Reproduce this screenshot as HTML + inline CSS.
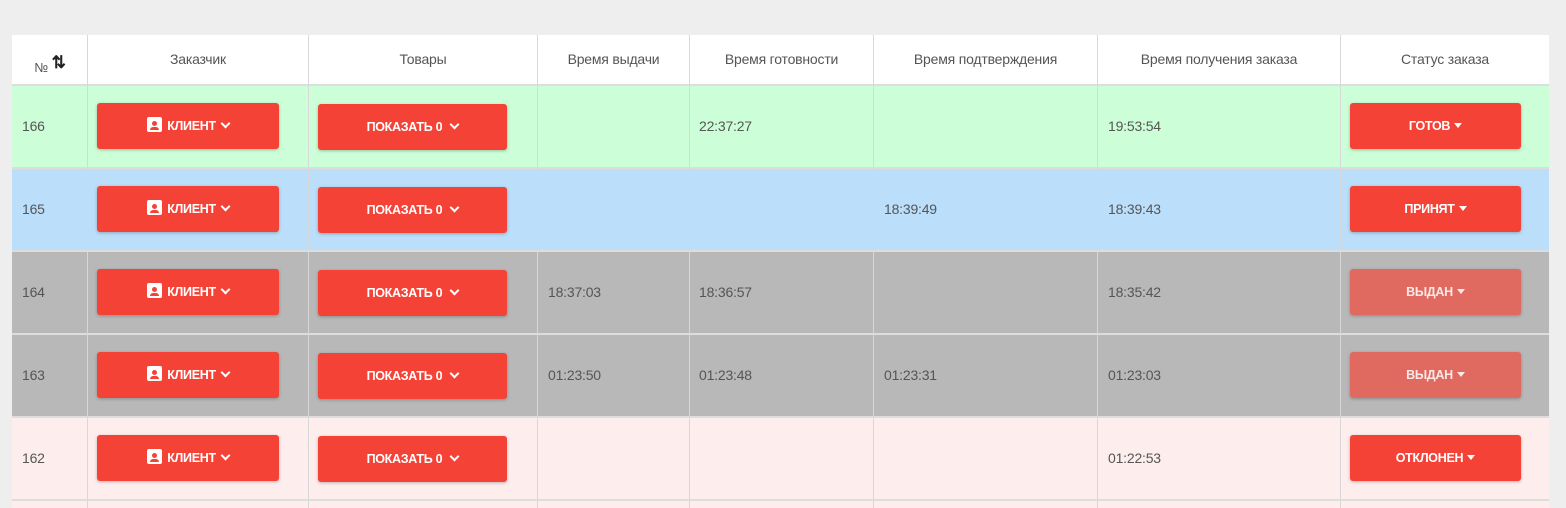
<!DOCTYPE html>
<html><head><meta charset="utf-8"><style>
html,body{margin:0;width:1566px;height:508px;overflow:hidden}
body{background:#eeeeee;font-family:"Liberation Sans",sans-serif;position:relative}
.t{position:absolute;left:12px;top:35px;width:1537px;height:473px;background:#fff}
.h{position:absolute;top:35px;height:50px;border-left:1px solid #e0e0e0;font-size:14px;color:#555;text-align:center;line-height:48px;box-sizing:border-box;letter-spacing:-0.2px}
.r{position:absolute;left:12px;width:1537px;height:83px;border-bottom:2px solid #ddd;box-sizing:border-box}
.v{position:absolute;width:1px;background:#d8d8d8}
.c{position:absolute;font-size:14px;color:#555;letter-spacing:-0.2px}
.b{position:absolute;height:46px;background:#f44336;color:#fff;font-weight:bold;font-size:12.5px;text-align:center;line-height:46px;border-radius:3px;box-shadow:0 1px 3px rgba(0,0,0,.25);letter-spacing:-0.3px}
.b.f{background:#e06a60;color:#fbe9e7}
.ch{display:inline-block;width:5px;height:5px;border-right:2px solid #fff;border-bottom:2px solid #fff;transform:rotate(45deg);margin-left:6px;position:relative;top:-3px}
.tr{display:inline-block;border-left:4px solid transparent;border-right:4px solid transparent;border-top:5px solid currentColor;margin-left:4px;vertical-align:2px}
.ic{display:inline-block;width:15px;height:15px;background:#fff;border-radius:2px;vertical-align:-2px;margin-right:5px;position:relative}
.ic:before{content:"";position:absolute;left:5px;top:4px;width:5px;height:5px;border-radius:50%;background:#f44336}
.ic:after{content:"";position:absolute;left:3px;top:10px;width:9px;height:3px;border-radius:3px 3px 0 0;background:#f44336}
</style></head><body>
<div class="t"></div>
<div class="h" style="left:12px;width:76px;border-left:none;font-size:13px;line-height:56px">№ <span style="font-size:17px;font-weight:bold;color:#222;vertical-align:4px">⇅</span></div>
<div class="h" style="left:87px;width:221px">Заказчик</div>
<div class="h" style="left:308px;width:229px">Товары</div>
<div class="h" style="left:537px;width:152px">Время выдачи</div>
<div class="h" style="left:689px;width:184px">Время готовности</div>
<div class="h" style="left:873px;width:224px">Время подтверждения</div>
<div class="h" style="left:1097px;width:243px">Время получения заказа</div>
<div class="h" style="left:1340px;width:209px">Статус заказа</div>
<div style="position:absolute;left:12px;top:84px;width:1537px;height:2px;background:#ddd"></div>

<div class="r" style="top:86px;background:#ccffd8"></div>
<div class="r" style="top:169px;background:#bbdefb"></div>
<div class="r" style="top:252px;background:#b8b8b8"></div>
<div class="r" style="top:335px;background:#b8b8b8"></div>
<div class="r" style="top:418px;background:#fdeded"></div>
<div class="r" style="top:501px;height:7px;background:#fdeded;border:none"></div>

<div class="v" style="left:87px;top:35px;height:473px"></div>
<div class="v" style="left:308px;top:35px;height:473px"></div>
<div class="v" style="left:537px;top:35px;height:473px"></div>
<div class="v" style="left:689px;top:35px;height:473px"></div>
<div class="v" style="left:873px;top:35px;height:473px"></div>
<div class="v" style="left:1097px;top:35px;height:473px"></div>
<div class="v" style="left:1340px;top:35px;height:473px"></div>

<div class="c" style="left:22px;top:118px">166</div>
<div class="c" style="left:22px;top:201px">165</div>
<div class="c" style="left:22px;top:284px">164</div>
<div class="c" style="left:22px;top:367px">163</div>
<div class="c" style="left:22px;top:450px">162</div>

<div class="b" style="left:97px;top:103px;width:182px"><span class="ic"></span>КЛИЕНТ<span class="ch"></span></div>
<div class="b" style="left:97px;top:186px;width:182px"><span class="ic"></span>КЛИЕНТ<span class="ch"></span></div>
<div class="b" style="left:97px;top:269px;width:182px"><span class="ic"></span>КЛИЕНТ<span class="ch"></span></div>
<div class="b" style="left:97px;top:352px;width:182px"><span class="ic"></span>КЛИЕНТ<span class="ch"></span></div>
<div class="b" style="left:97px;top:435px;width:182px"><span class="ic"></span>КЛИЕНТ<span class="ch"></span></div>

<div class="b" style="left:318px;top:104px;width:189px">ПОКАЗАТЬ 0 <span class="ch"></span></div>
<div class="b" style="left:318px;top:187px;width:189px">ПОКАЗАТЬ 0 <span class="ch"></span></div>
<div class="b" style="left:318px;top:270px;width:189px">ПОКАЗАТЬ 0 <span class="ch"></span></div>
<div class="b" style="left:318px;top:353px;width:189px">ПОКАЗАТЬ 0 <span class="ch"></span></div>
<div class="b" style="left:318px;top:436px;width:189px">ПОКАЗАТЬ 0 <span class="ch"></span></div>

<div class="c" style="left:699px;top:118px">22:37:27</div>
<div class="c" style="left:1108px;top:118px">19:53:54</div>
<div class="c" style="left:884px;top:201px">18:39:49</div>
<div class="c" style="left:1108px;top:201px">18:39:43</div>
<div class="c" style="left:548px;top:284px">18:37:03</div>
<div class="c" style="left:699px;top:284px">18:36:57</div>
<div class="c" style="left:1108px;top:284px">18:35:42</div>
<div class="c" style="left:548px;top:367px">01:23:50</div>
<div class="c" style="left:699px;top:367px">01:23:48</div>
<div class="c" style="left:884px;top:367px">01:23:31</div>
<div class="c" style="left:1108px;top:367px">01:23:03</div>
<div class="c" style="left:1108px;top:450px">01:22:53</div>

<div class="b" style="left:1350px;top:103px;width:171px">ГОТОВ<span class="tr"></span></div>
<div class="b" style="left:1350px;top:186px;width:171px">ПРИНЯТ<span class="tr"></span></div>
<div class="b f" style="left:1350px;top:269px;width:171px">ВЫДАН<span class="tr"></span></div>
<div class="b f" style="left:1350px;top:352px;width:171px">ВЫДАН<span class="tr"></span></div>
<div class="b" style="left:1350px;top:435px;width:171px">ОТКЛОНЕН<span class="tr"></span></div>
</body></html>
